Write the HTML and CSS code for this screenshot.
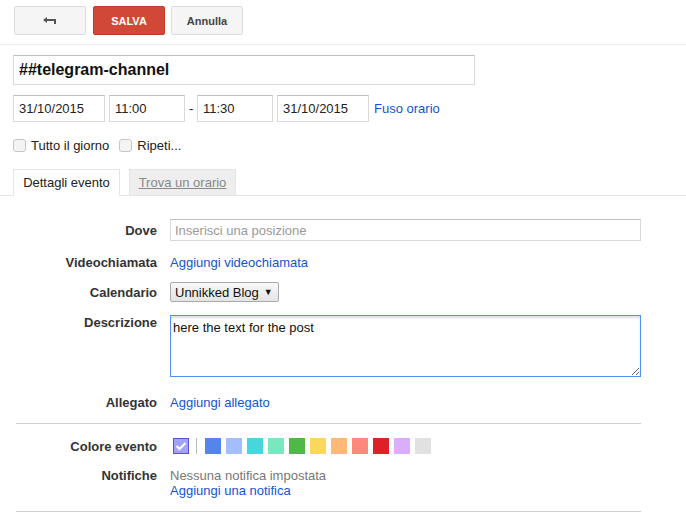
FILE: index.html
```html
<!DOCTYPE html>
<html>
<head>
<meta charset="utf-8">
<link rel="stylesheet" href="styles.css">
</head>
<body>
<div class="topbar">
  <button class="btn back" aria-label="Indietro">
    <svg width="14" height="8" viewBox="0 0 14 8"><path d="M0 3 L4 0 L4 2 L13 2 L13 7 L11 7 L11 4 L4 4 L4 6 Z" fill="#555"/></svg>
  </button>
  <button class="btn save">SALVA</button>
  <button class="btn cancel">Annulla</button>
</div>

<div class="main">
  <input class="title" type="text" value="##telegram-channel">
  <div class="daterow">
    <input class="field date" type="text" value="31/10/2015">
    <input class="field time t1" type="text" value="11:00">
    <span class="dash">-</span>
    <input class="field time t2" type="text" value="11:30">
    <input class="field date d2" type="text" value="31/10/2015">
    <a class="link tz" href="#">Fuso orario</a>
  </div>
  <div class="checks">
    <label class="check"><span class="box"></span>Tutto il giorno</label>
    <label class="check"><span class="box"></span>Ripeti...</label>
  </div>
</div>

<div class="tabs">
  <div class="tab active">Dettagli evento</div>
  <div class="tab inactive"><span>Trova un orario</span></div>
</div>

<div class="form">
  <div class="row r-dove">
    <div class="lbl">Dove</div>
    <input class="field where" type="text" placeholder="Inserisci una posizione">
  </div>
  <div class="row r-video">
    <div class="lbl">Videochiamata</div>
    <a class="link" href="#">Aggiungi videochiamata</a>
  </div>
  <div class="row r-cal">
    <div class="lbl">Calendario</div>
    <div><span class="select">Unnikked Blog <span class="arrow">&#9660;</span></span></div>
  </div>
  <div class="row r-desc">
    <div class="lbl">Descrizione</div>
    <textarea class="desc">here the text for the post</textarea>
  </div>
  <div class="row r-att">
    <div class="lbl">Allegato</div>
    <a class="link" href="#">Aggiungi allegato</a>
  </div>
  <div class="hr hr1"></div>
  <div class="row r-color">
    <div class="lbl">Colore evento</div>
    <div class="swatches">
      <span class="sw checked">
        <svg width="12" height="10" viewBox="0 0 12 10"><path d="M1.5 5 L4.5 8 L10.5 2" fill="none" stroke="#fff" stroke-width="2"/></svg>
      </span>
      <span class="sep"></span>
      <span class="sw" style="background:#5484ed"></span>
      <span class="sw" style="background:#a4bdfc"></span>
      <span class="sw" style="background:#46d6db"></span>
      <span class="sw" style="background:#7ae7bf"></span>
      <span class="sw" style="background:#51b749"></span>
      <span class="sw" style="background:#fbd75b"></span>
      <span class="sw" style="background:#ffb878"></span>
      <span class="sw" style="background:#ff887c"></span>
      <span class="sw" style="background:#dc2127"></span>
      <span class="sw" style="background:#dbadff"></span>
      <span class="sw" style="background:#e1e1e1"></span>
    </div>
  </div>
  <div class="row r-notif">
    <div class="lbl">Notifiche</div>
    <div class="notif">
      <div class="muted">Nessuna notifica impostata</div>
      <a class="link" href="#">Aggiungi una notifica</a>
    </div>
  </div>
  <div class="hr hr2"></div>
</div>
</body>
</html>
```

FILE: styles.css
```css
* { box-sizing: border-box; }
html, body { margin: 0; padding: 0; background: #fff; }
body {
  font-family: "Liberation Sans", Arial, sans-serif;
  font-size: 13px;
  color: #222;
  overflow: hidden;
}

.topbar {
  display: flex;
  gap: 7px;
  padding: 6px 14px 9px;
  border-bottom: 1px solid #ebebeb;
  height: 45px;
}
.btn {
  height: 29px;
  width: 72px;
  border-radius: 2px;
  font-family: "Liberation Sans", Arial, sans-serif;
  font-weight: bold;
  font-size: 11px;
  padding: 0;
  display: flex;
  align-items: center;
  justify-content: center;
}
.back {
  background: #f5f5f5;
  border: 1px solid #dcdcdc;
}
.save {
  background: #d14836;
  border: 1px solid #c53727;
  color: #fff;
}
.cancel {
  background: #f5f5f5;
  border: 1px solid #dcdcdc;
  color: #444;
  margin-left: -1px;
}

.main { padding-left: 13px; }
.title {
  display: block;
  margin-top: 10px;
  width: 462px;
  height: 30px;
  border: 1px solid #d9d9d9;
  border-top-color: #c0c0c0;
  padding: 0 5px;
  font-family: "Liberation Sans", Arial, sans-serif;
  font-weight: bold;
  font-size: 16px;
  color: #111;
  outline: none;
}
.field {
  height: 27px;
  border: 1px solid #d9d9d9;
  border-top-color: #c0c0c0;
  padding: 0 5px;
  font-family: "Liberation Sans", Arial, sans-serif;
  font-size: 13px;
  color: #222;
  outline: none;
}
.daterow {
  display: flex;
  align-items: center;
  margin-top: 10px;
  height: 27px;
}
.date { width: 92px; }
.time { width: 76px; }
.t1 { margin-left: 4px; }
.dash { width: 4px; margin: 0 4px 0 4px; }
.d2 { margin-left: 4px; }
.tz { margin-left: 5px; }
.link { color: #1155cc; text-decoration: none; }

.checks {
  display: flex;
  gap: 10px;
  margin-top: 15px;
  height: 16px;
  align-items: center;
}
.check { display: flex; align-items: center; gap: 5px; color: #222; }
.box {
  width: 13px;
  height: 13px;
  border: 1px solid #c6c6c6;
  border-radius: 3px;
  background: #f4f4f4;
  display: inline-block;
}

.tabs {
  display: flex;
  gap: 9px;
  margin-top: 16px;
  padding-left: 13px;
  border-bottom: 1px solid #e5e5e5;
  height: 27px;
}
.tab {
  width: 107px;
  height: 27px;
  display: flex;
  align-items: center;
  justify-content: center;
}
.tab.active {
  background: #fff;
  border: 1px solid #e5e5e5;
  border-bottom: 1px solid #fff;
  color: #222;
}
.tab.inactive {
  background: #eeeeee;
  border: 1px solid #e5e5e5;
  border-bottom: none;
  height: 26px;
  color: #888;
}
.tab.inactive span { text-decoration: underline; }

.row {
  display: grid;
  grid-template-columns: 157px 471px;
  column-gap: 13px;
  align-items: center;
}
.lbl {
  text-align: right;
  font-weight: bold;
  color: #333;
}
.r-dove { margin-top: 23px; }
.where { height: 22px; padding: 0 4px; }
.where::placeholder { color: #999; }
.r-video { margin-top: 11px; height: 20px; }
.r-cal { margin-top: 10px; height: 20px; }
.select {
  display: inline-flex;
  align-items: center;
  height: 20px;
  padding: 0 5px 0 4px;
  border: 1px solid #a9a9a9;
  border-radius: 2px;
  background: linear-gradient(#f8f8f8, #e4e4e4);
  color: #111;
}
.arrow { font-size: 9px; margin-left: 5px; }
.r-desc { margin-top: 13px; align-items: start; }
.r-desc .lbl { padding-top: 0; }
.desc {
  height: 62px;
  border: 1px solid #4d90fe;
  box-shadow: inset 0 2px 2px rgba(0,0,0,0.12);
  padding: 4px 2px;
  font-family: "Liberation Sans", Arial, sans-serif;
  font-size: 13px;
  color: #111;
  resize: vertical;
  outline: none;
}
.r-att { margin-top: 15px; height: 20px; }
.hr {
  margin-left: 16px;
  width: 625px;
  height: 1px;
  background: #d0d0d0;
}
.hr1 { margin-top: 11px; }
.r-color { margin-top: 12px; height: 20px; }
.swatches { display: flex; align-items: center; gap: 5px; padding-left: 3px; }
.sw { width: 16px; height: 16px; display: inline-block; }
.sw.checked {
  background: #a2a2f8;
  border: 1px solid #5353de;
  display: inline-flex;
  align-items: center;
  justify-content: center;
}
.sep { width: 1px; height: 16px; background: #bbb; margin: 0 3px 0 2px; }
.r-notif { margin-top: 12px; align-items: start; }
.r-notif .lbl { line-height: 15px; }
.notif { line-height: 15px; }
.muted { color: #777; }
.hr2 { margin-top: 13px; }
```
